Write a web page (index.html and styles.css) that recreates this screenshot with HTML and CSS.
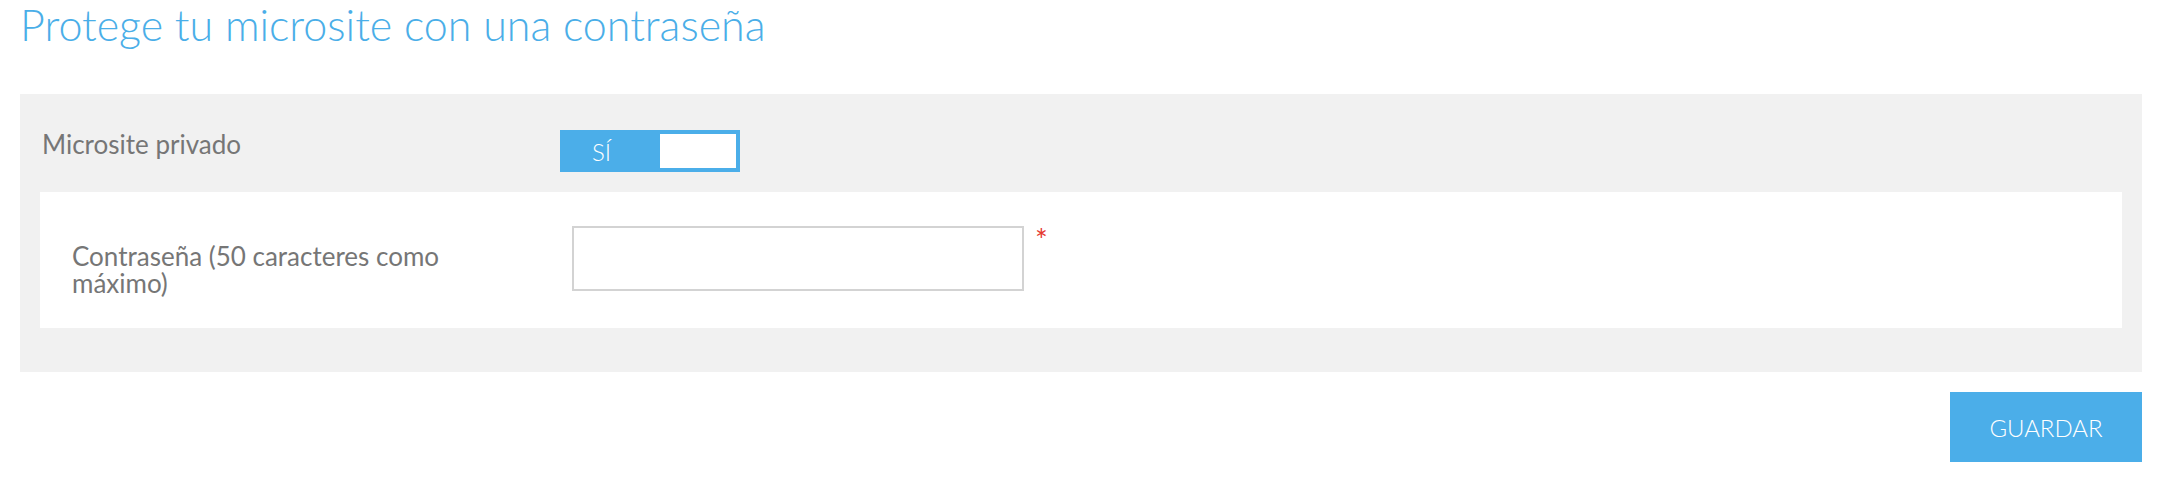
FILE: index.html
```html
<!DOCTYPE html>
<html lang="es">
<head>
    <meta charset="utf-8">
    <title>Microsite privado</title>
    <link rel="stylesheet" href="styles.css">
</head>
<body>
    <div class="page">
        <h1 class="page-title">Protege tu microsite con una contraseña</h1>

        <div class="panel">
            <div class="row row-private">
                <span class="row-label">Microsite privado</span>
                <div class="toggle">
                    <span class="toggle-on">SÍ</span>
                    <span class="toggle-knob"></span>
                </div>
            </div>

            <div class="card">
                <label class="card-label" for="password">Contraseña (50 caracteres como máximo)</label>
                <div class="field">
                    <input type="password" id="password" class="field-input" maxlength="50">
                    <span class="required">*</span>
                </div>
            </div>
        </div>

        <div class="actions">
            <button class="btn-save">GUARDAR</button>
        </div>
    </div>
</body>
</html>
```

FILE: styles.css
```css
body {
    margin: 0;
    padding: 0;
    background-color: #ffffff;
    font-family: Lato, "Open Sans", sans-serif;
    color: #767676;
}

.page {
    padding: 0 22px 0 20px;
}

.page-title {
    margin: 0 0 44px 0;
    font-size: 43px;
    font-weight: 300;
    line-height: 50px;
    color: #4aaee8;
}

.panel {
    background: #f1f1f1;
    padding: 36px 20px 44px 20px;
}

.row {
    display: grid;
    grid-template-columns: 518px auto;
    padding-left: 22px;
    margin-left: -20px;
}

.row-label {
    font-size: 26px;
    margin-top: -2px;
}

.toggle {
    display: flex;
    width: 172px;
    height: 34px;
    border: 4px solid #4baee9;
    background: #4baee9;
}

.toggle-on {
    width: 96px;
    box-sizing: border-box;
    padding-left: 28px;
    color: #ffffff;
    font-size: 24px;
    font-weight: 300;
    line-height: 36px;
}

.toggle-knob {
    width: 76px;
    background: #ffffff;
}

.card {
    display: grid;
    grid-template-columns: 500px auto;
    align-items: start;
    background: #ffffff;
    margin-top: 20px;
    padding: 34px 0 37px 32px;
}

.card-label {
    width: 400px;
    margin-top: 17px;
    margin-bottom: -20px;
    font-size: 26px;
    line-height: 27px;
}

.field {
    display: flex;
    align-items: flex-start;
}

.field-input {
    width: 452px;
    height: 65px;
    box-sizing: border-box;
    border: 2px solid #d3d3d3;
    background: #ffffff;
    margin: 0;
}

.required {
    margin-left: 11px;
    margin-top: -2px;
    color: #e53a2f;
    font-size: 30px;
    line-height: 30px;
}

.actions {
    display: flex;
    justify-content: flex-end;
    margin-top: 20px;
}

.btn-save {
    width: 192px;
    height: 70px;
    border: none;
    background: #4baee9;
    color: #ffffff;
    font-family: Lato, "Open Sans", sans-serif;
    font-size: 24px;
    font-weight: 300;
    cursor: pointer;
}
```
